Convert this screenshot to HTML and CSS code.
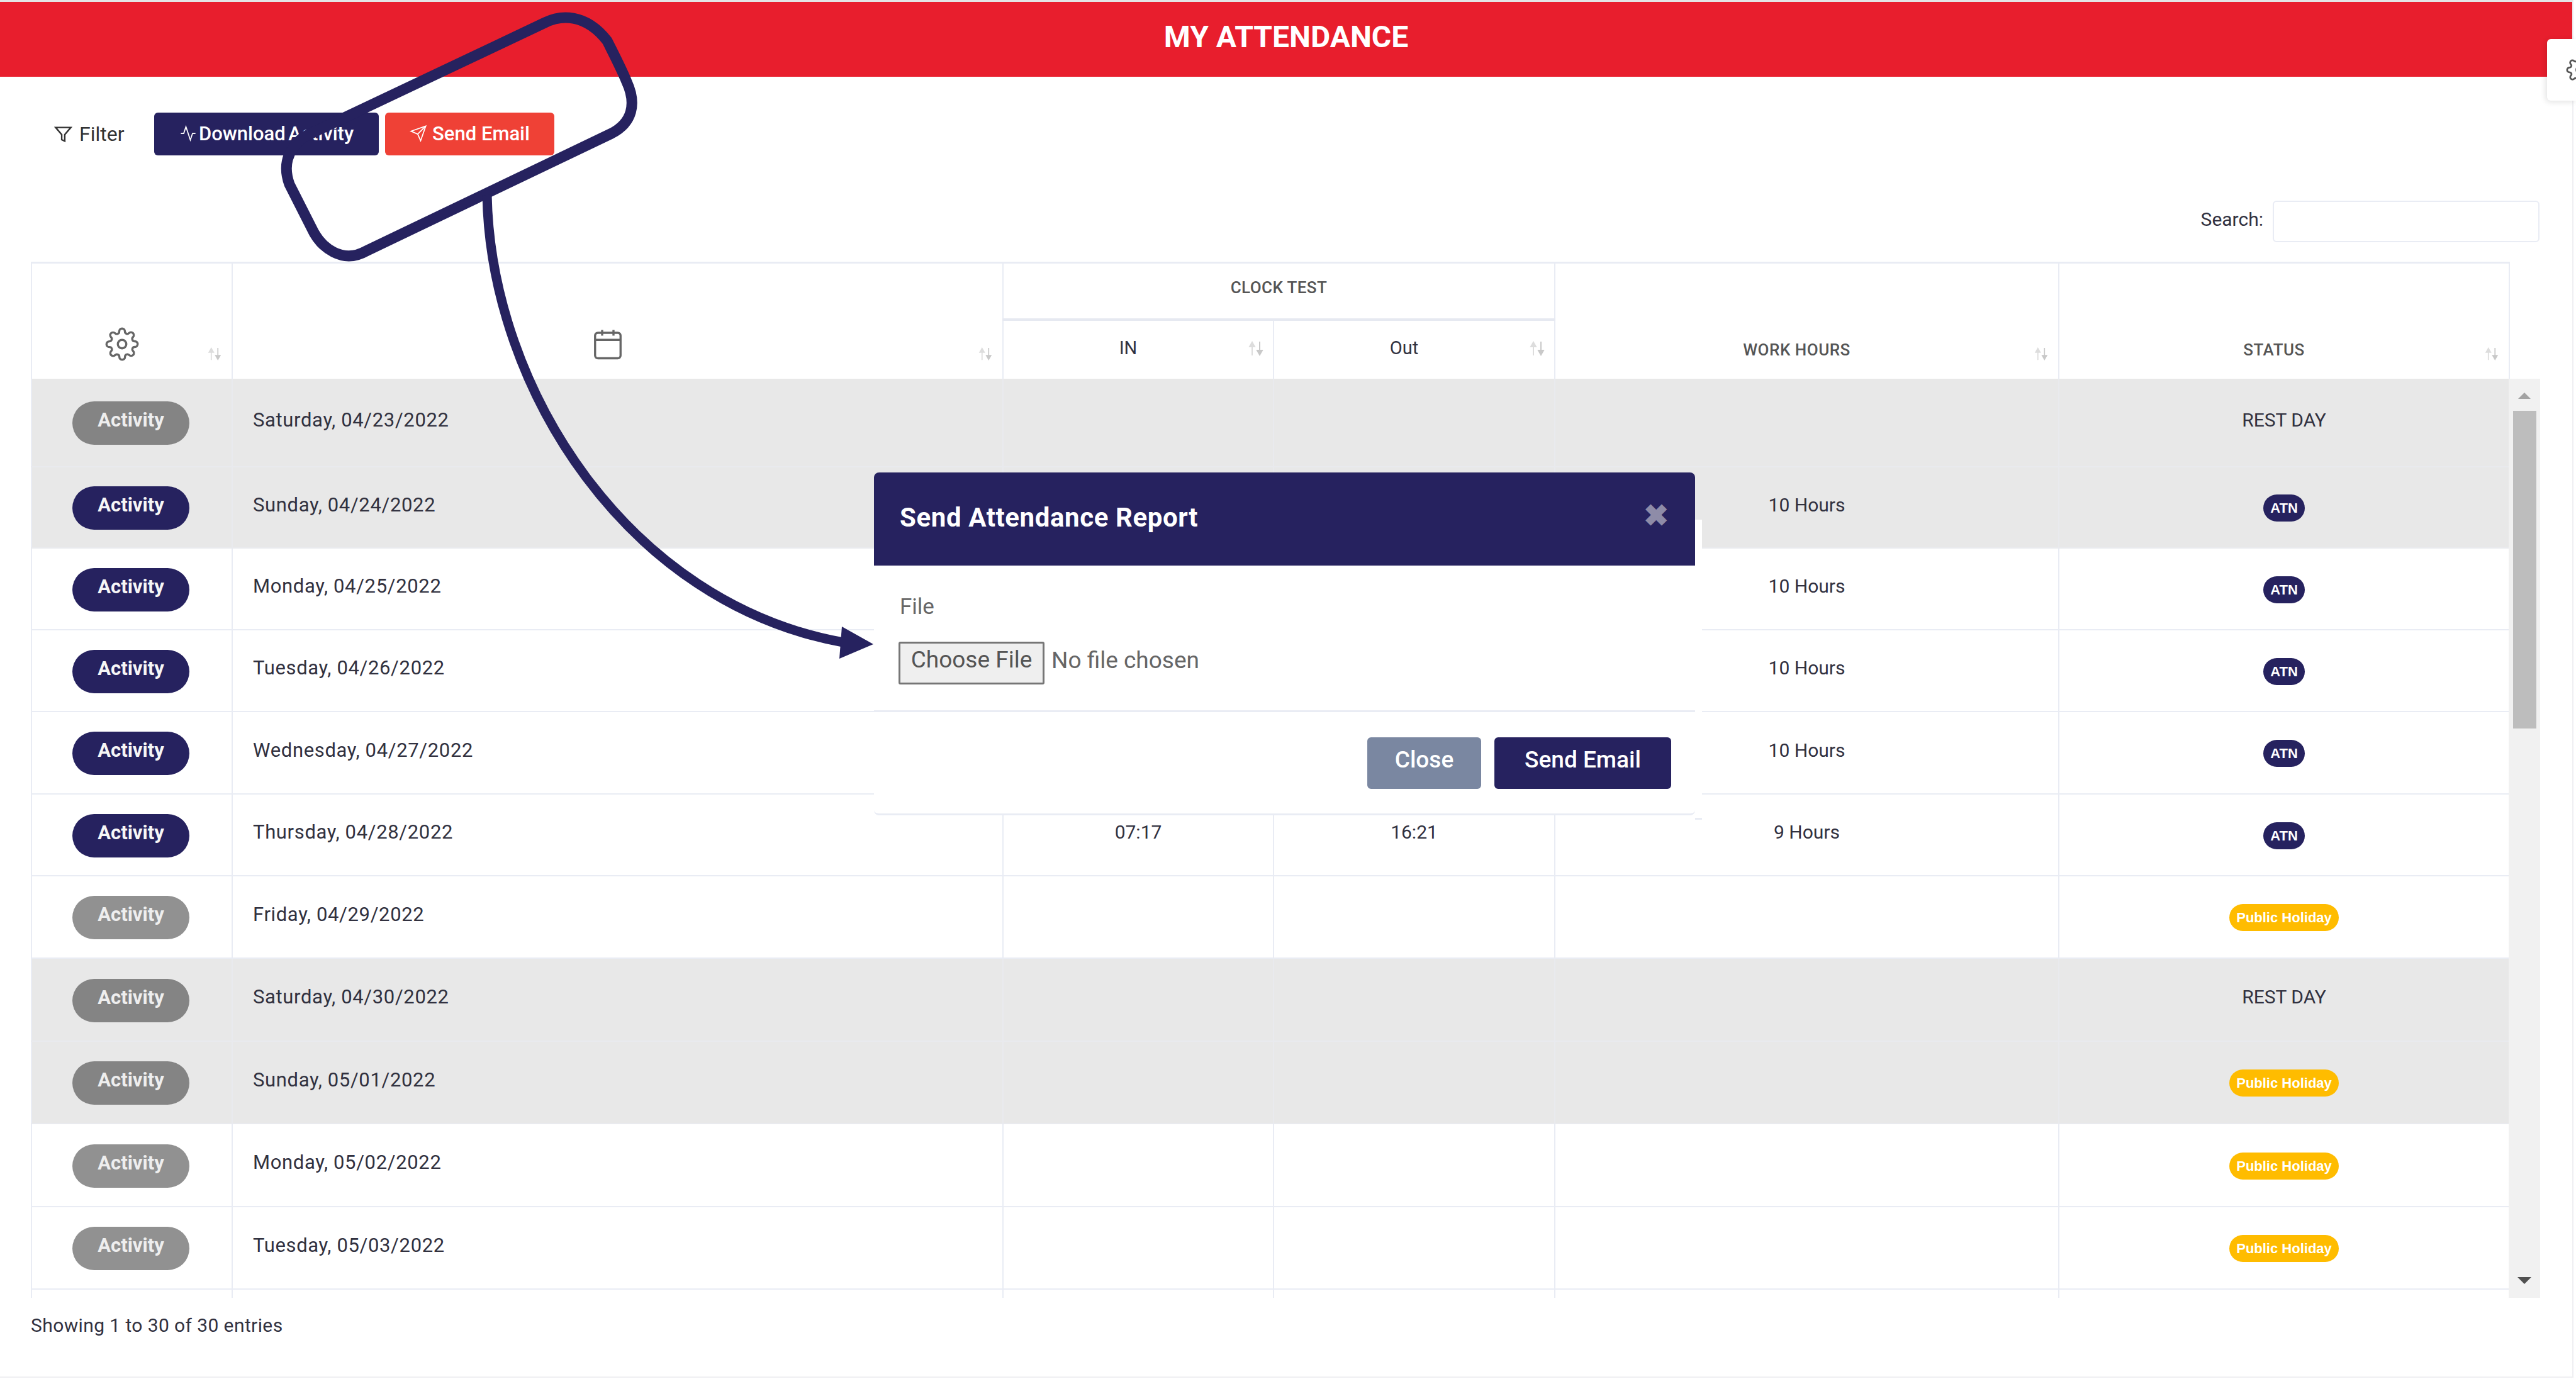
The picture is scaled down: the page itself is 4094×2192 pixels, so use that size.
FILE: index.html
```html
<!DOCTYPE html>
<html lang="en">
<head>
    <meta charset="UTF-8">
    <title>My Attendance</title>
    <link rel="stylesheet" href="styles.css">
</head>
<body>

<svg class="defs" width="0" height="0">
    <symbol id="sort" viewBox="0 0 26 24">
        <path class="sort-up" d="M7 23V6M3 9l4-7 4 7z"/>
        <path class="sort-down" d="M19 1v17M15 15l4 7 4-7z"/>
    </symbol>
    <symbol id="gear" viewBox="0 0 24 24">
        <circle cx="12" cy="12" r="3"/>
        <path d="M19.4 15a1.65 1.65 0 0 0 .33 1.82l.06.06a2 2 0 0 1 0 2.83 2 2 0 0 1-2.83 0l-.06-.06a1.65 1.65 0 0 0-1.82-.33 1.65 1.65 0 0 0-1 1.51V21a2 2 0 0 1-2 2 2 2 0 0 1-2-2v-.09A1.65 1.65 0 0 0 9 19.4a1.65 1.65 0 0 0-1.82.33l-.06.06a2 2 0 0 1-2.83 0 2 2 0 0 1 0-2.83l.06-.06a1.65 1.65 0 0 0 .33-1.82 1.65 1.65 0 0 0-1.51-1H3a2 2 0 0 1-2-2 2 2 0 0 1 2-2h.09A1.65 1.65 0 0 0 4.6 9a1.65 1.65 0 0 0-.33-1.82l-.06-.06a2 2 0 0 1 0-2.83 2 2 0 0 1 2.83 0l.06.06a1.65 1.65 0 0 0 1.82.33H9a1.65 1.65 0 0 0 1-1.51V3a2 2 0 0 1 2-2 2 2 0 0 1 2 2v.09a1.65 1.65 0 0 0 1 1.51 1.65 1.65 0 0 0 1.82-.33l.06-.06a2 2 0 0 1 2.83 0 2 2 0 0 1 0 2.83l-.06.06a1.65 1.65 0 0 0-.33 1.82V9a1.65 1.65 0 0 0 1.51 1H21a2 2 0 0 1 2 2 2 2 0 0 1-2 2h-.09a1.65 1.65 0 0 0-1.51 1z"/>
    </symbol>
</svg>

<div class="page">
    <header class="title-bar">MY ATTENDANCE</header>

    <div class="toolbar">
        <span class="filter">
            <svg class="icon-filter" viewBox="0 0 24 24"><polygon points="22 3 2 3 10 12.46 10 19 14 21 14 12.46 22 3"/></svg>
            Filter
        </span>
        <button class="btn btn-download">
            <svg class="btn-icon" viewBox="0 0 24 24"><polyline points="22 12 18 12 15 21 9 3 6 12 2 12"/></svg>
            Download Activity
        </button>
        <button class="btn btn-send">
            <svg class="btn-icon" viewBox="0 0 24 24"><line x1="22" y1="2" x2="11" y2="13"/><polygon points="22 2 15 22 11 13 2 9 22 2"/></svg>
            Send Email
        </button>
    </div>

    <div class="search-row">
        <label for="search">Search:</label>
        <input id="search" class="search-input" type="text">
    </div>

    <div class="table-area">
        <table class="grid grid-head">
            <colgroup>
                <col class="c1"><col class="c2"><col class="c3"><col class="c4"><col class="c5"><col class="c6">
            </colgroup>
            <thead>
                <tr class="head-top">
                    <th rowspan="2" class="th-low">
                        <svg class="head-icon"><use href="#gear"/></svg>
                        <svg class="sort"><use href="#sort"/></svg>
                    </th>
                    <th rowspan="2" class="th-low">
                        <svg class="head-icon" viewBox="0 0 24 24"><rect x="3" y="4" width="18" height="18" rx="2"/><line x1="16" y1="2" x2="16" y2="6"/><line x1="8" y1="2" x2="8" y2="6"/><line x1="3" y1="9" x2="21" y2="9"/></svg>
                        <svg class="sort"><use href="#sort"/></svg>
                    </th>
                    <th colspan="2" class="th-group">CLOCK TEST</th>
                    <th rowspan="2" class="th-low th-label">WORK HOURS<svg class="sort"><use href="#sort"/></svg></th>
                    <th rowspan="2" class="th-low th-label">STATUS<svg class="sort"><use href="#sort"/></svg></th>
                </tr>
                <tr class="head-sub">
                    <th class="th-sub">IN<svg class="sort sort-dark"><use href="#sort"/></svg></th>
                    <th class="th-sub">Out<svg class="sort sort-dark"><use href="#sort"/></svg></th>
                </tr>
            </thead>
        </table>

        <div class="scroll-wrap">
            <div class="scroll-body">
                <table class="grid">
                    <colgroup>
                        <col class="c1"><col class="c2"><col class="c3"><col class="c4"><col class="c5"><col class="c6">
                    </colgroup>
                    <tbody>
                        <tr class="off row-first"><td class="action"><span class="pill pill-muted">Activity</span></td><td class="date">Saturday, 04/23/2022</td><td></td><td></td><td></td><td class="status">REST DAY</td></tr>
                        <tr class="off row-second"><td class="action"><span class="pill">Activity</span></td><td class="date">Sunday, 04/24/2022</td><td></td><td></td><td class="mid">10 Hours</td><td class="action"><span class="tag">ATN</span></td></tr>
                        <tr class="row-short"><td class="action"><span class="pill">Activity</span></td><td class="date">Monday, 04/25/2022</td><td></td><td></td><td class="mid">10 Hours</td><td class="action"><span class="tag">ATN</span></td></tr>
                        <tr class="row-short"><td class="action"><span class="pill">Activity</span></td><td class="date">Tuesday, 04/26/2022</td><td></td><td></td><td class="mid">10 Hours</td><td class="action"><span class="tag">ATN</span></td></tr>
                        <tr><td class="action"><span class="pill">Activity</span></td><td class="date">Wednesday, 04/27/2022</td><td></td><td></td><td class="mid">10 Hours</td><td class="action"><span class="tag">ATN</span></td></tr>
                        <tr class="row-short"><td class="action"><span class="pill">Activity</span></td><td class="date">Thursday, 04/28/2022</td><td class="mid">07:17</td><td class="mid">16:21</td><td class="mid">9 Hours</td><td class="action"><span class="tag">ATN</span></td></tr>
                        <tr><td class="action"><span class="pill pill-muted">Activity</span></td><td class="date">Friday, 04/29/2022</td><td></td><td></td><td></td><td class="action"><span class="tag tag-holiday">Public Holiday</span></td></tr>
                        <tr class="off row-tall"><td class="action"><span class="pill pill-muted">Activity</span></td><td class="date">Saturday, 04/30/2022</td><td></td><td></td><td></td><td class="status">REST DAY</td></tr>
                        <tr class="off"><td class="action"><span class="pill pill-muted">Activity</span></td><td class="date">Sunday, 05/01/2022</td><td></td><td></td><td></td><td class="action"><span class="tag tag-holiday">Public Holiday</span></td></tr>
                        <tr class="row-tall"><td class="action"><span class="pill pill-muted">Activity</span></td><td class="date">Monday, 05/02/2022</td><td></td><td></td><td></td><td class="action"><span class="tag tag-holiday">Public Holiday</span></td></tr>
                        <tr><td class="action"><span class="pill pill-muted">Activity</span></td><td class="date">Tuesday, 05/03/2022</td><td></td><td></td><td></td><td class="action"><span class="tag tag-holiday">Public Holiday</span></td></tr>
                        <tr><td></td><td></td><td></td><td></td><td></td><td></td></tr>
                    </tbody>
                </table>
            </div>
            <div class="scrollbar">
                <span class="arrow-up"></span>
                <span class="thumb"></span>
                <span class="arrow-down"></span>
            </div>
        </div>
    </div>

    <div class="info">Showing 1 to 30 of 30 entries</div>
</div>

<div class="side-tab">
    <svg class="side-gear"><use href="#gear"/></svg>
</div>

<div class="modal">
    <div class="modal-head">
        <h2>Send Attendance Report</h2>
        <span class="modal-x">&#10006;</span>
    </div>
    <div class="modal-body">
        <div class="field-label">File</div>
        <div class="file-row">
            <span class="file-btn">Choose File</span>
            <span class="file-name">No file chosen</span>
        </div>
    </div>
    <div class="modal-foot">
        <button class="btn-modal btn-close">Close</button>
        <button class="btn-modal btn-submit">Send Email</button>
    </div>
</div>

<svg class="callout" viewBox="0 0 4094 2192">
    <path class="callout-line" d="M482 218L866 36C890 24 930 20 965 65C975 85 988 110 996 130C1012 165 1005 195 972 212L582 399C545 420 510 395 495 362L460 293C450 265 455 240 482 218Z"/>
    <path class="callout-line callout-thin" d="M774 310C780 620 1000 960 1340 1021"/>
    <polygon class="callout-head" points="1338,996 1388,1024 1334,1047"/>
</svg>

</body>
</html>
```

FILE: styles.css
```css
* { box-sizing: border-box; }

body { margin: 0; width: 4094px; height: 2192px; overflow: hidden; background: #fff; font-family: Roboto, "Liberation Sans", sans-serif; color: #31313f; position: relative; }
button { font-family: inherit; border: none; }
.defs { position: absolute; }

.page { width: 4090px; height: 2190px; border-top: 3px solid #e4e4e4; border-right: 2px solid #efeff2; border-bottom: 2px solid #efeff2; }

.title-bar { height: 119px; padding-bottom: 8px; background: #e81e2d; color: #fff; font-size: 48px; font-weight: 700; display: flex; align-items: center; justify-content: center; }

.toolbar { display: flex; align-items: center; height: 68px; margin-top: 57px; padding-left: 86px; gap: 10px; }
.filter { display: flex; align-items: center; width: 149px; gap: 11px; font-size: 32px; color: #333; }
.icon-filter { width: 29px; height: 29px; fill: none; stroke: #333; stroke-width: 2; }
.btn { display: flex; align-items: center; justify-content: center; height: 68px; padding-bottom: 3px; border-radius: 6px; color: #fff; font-size: 31px; font-weight: 500; gap: 3px; }
.btn-icon { width: 28px; height: 28px; fill: none; stroke: #fff; stroke-width: 1.5; }
.btn-download { width: 357px; background: #26225f; word-spacing: -3px; }
.btn-send { width: 269px; background: #ef4136; gap: 8px; }

.search-row { display: flex; align-items: center; justify-content: flex-end; gap: 15px; height: 66px; margin-top: 72px; padding-right: 52px; font-size: 30px; color: #31313f; }
.search-row label { padding-bottom: 8px; }
.search-input { width: 424px; height: 66px; border: 2px solid #e9ecf4; border-radius: 6px; background: #fff; }

.table-area { margin: 31px 0 0 49px; }
.grid { width: 3938px; table-layout: fixed; border-collapse: collapse; }
.c1 { width: 319px; }
.c2 { width: 1225px; }
.c3 { width: 430px; }
.c4 { width: 447px; }
.c5 { width: 801px; }
.c6 { width: 716px; }

.grid-head { border-top: 3px solid #e9ecf4; border-left: 2px solid #e9ecf4; }
.grid-head th { position: relative; padding: 0; border-right: 2px solid #e9ecf4; font-weight: 500; color: #555; }
.head-top { height: 90px; }
.head-sub { height: 94px; }
.th-group { font-size: 26px; letter-spacing: .4px; border-bottom: 4px solid #e6e9f1; padding-bottom: 10px !important; }
.th-low { vertical-align: bottom; padding: 0 32px 28px 0 !important; }
.th-label { font-size: 26px; letter-spacing: .5px; padding-bottom: 31px !important; }
.th-sub { font-size: 29px; font-weight: 400 !important; padding: 0 32px 6px 0 !important; color: #31313f !important; }
.head-icon { display: block; margin: 0 auto; width: 54px; height: 54px; fill: none; stroke: #666; stroke-width: 1.5; }
.sort { position: absolute; right: 14px; bottom: 29px; width: 26px; height: 21px; }
.sort-dark { bottom: 36px; height: 24px; }
.sort-up { fill: #ddd; stroke: #ddd; stroke-width: 2; }
.sort-down { fill: #c9c9c9; stroke: #c9c9c9; stroke-width: 2; }

.scroll-wrap { display: flex; height: 1461px; }
.scroll-body { width: 3938px; height: 1461px; overflow: hidden; }
.scroll-body .grid { border-left: 2px solid #e9ecf4; }
.scroll-body tr { height: 131px; }
.scroll-body tr.row-first { height: 140px; }
.scroll-body tr.row-second { height: 129px; }
.scroll-body tr.row-short { height: 130px; }
.scroll-body tr.row-tall { height: 132px; }
.scroll-body td { padding: 0 0 8px; border-right: 2px solid #e9ecf4; border-bottom: 2px solid #e9ecf4; font-size: 30px; vertical-align: middle; }
.scroll-body tr.off td { background: #e8e8e8; border-color: #e9eaee; }
.scroll-body td.date { padding-left: 32px; font-size: 31px; letter-spacing: .65px; }
.scroll-body td.mid, .scroll-body td.status { text-align: center; }
.scroll-body td.action { text-align: center; padding: 3px 0 0; }

.pill { display: inline-block; width: 186px; height: 69px; margin-left: -3px; line-height: 60px; border-radius: 35px; background: #26225f; color: #f6f6f6; font-size: 31px; font-weight: 700; text-align: center; vertical-align: middle; }
.pill-muted { background: rgba(0, 0, 0, .43); color: #eee; }
.tag { display: inline-block; min-width: 66px; height: 43px; line-height: 43px; padding: 0 10px; border-radius: 22px; background: #26225f; color: #fff; font-size: 22px; font-weight: 700; text-align: center; vertical-align: middle; font-family: "Liberation Sans", sans-serif; }
.tag-holiday { width: 174px; background: #ffbc00; padding: 0; }

.scrollbar { display: flex; flex-direction: column; align-items: center; width: 50px; background: #f1f1f1; }
.arrow-up { margin-top: 22px; border-left: 10px solid transparent; border-right: 10px solid transparent; border-bottom: 10px solid #a3a3a3; }
.thumb { width: 37px; height: 505px; margin-top: 19px; background: #bdbdbd; }
.arrow-down { margin-top: auto; margin-bottom: 22px; border-left: 11px solid transparent; border-right: 11px solid transparent; border-top: 11px solid #505050; }

.info { margin: 29px 0 0 49px; font-size: 30px; letter-spacing: .4px; line-height: 30px; color: #31313f; }

.side-tab { position: absolute; right: 0; top: 62px; width: 46px; height: 98px; overflow: hidden; background: #fff; border-radius: 6px 0 0 6px; box-shadow: -2px 2px 10px rgba(0, 0, 0, .12); }
.side-gear { display: block; width: 44px; height: 44px; margin: 27px 0 0 30px; fill: none; stroke: #555; stroke-width: 1.5; }

.modal { position: absolute; left: 1389px; top: 751px; width: 1305px; height: 545px; display: flex; flex-direction: column; background: #fff; border-radius: 8px; border-bottom: 3px solid #e9ecf4; }
.modal::after { content: ""; position: absolute; left: 100%; top: 75px; width: 11px; height: 474px; background: #fff; border-bottom: 3px solid #e9ecf4; }
.modal-head { display: flex; align-items: flex-start; justify-content: space-between; height: 148px; padding: 47px 42px 0 41px; background: #26225f; border-radius: 8px 8px 0 0; color: #fff; }
.modal-head h2 { margin: 0; font-size: 42px; letter-spacing: .6px; line-height: 50px; font-weight: 700; }
.modal-x { color: #8e8ca8; font-size: 48px; line-height: 44px; font-weight: 700; }
.modal-body { height: 233px; padding: 45px 0 0 39px; border-bottom: 3px solid #e9ecf4; color: #666; font-size: 35px; }
.field-label { line-height: 42px; margin-left: 2px; }
.file-row { display: flex; align-items: center; gap: 11px; margin-top: 34px; font-size: 37px; }
.file-btn { display: flex; align-items: center; justify-content: center; width: 232px; height: 68px; padding-bottom: 11px; background: #efefef; border: 3px solid #767676; border-radius: 3px; color: #555; }
.file-name { padding-bottom: 9px; }
.modal-foot { display: flex; justify-content: flex-end; gap: 21px; padding: 40px 38px 0 0; }
.btn-modal { height: 82px; border-radius: 6px; color: #fff; font-size: 37px; font-weight: 500; padding-bottom: 13px; }
.btn-close { width: 181px; background: #7a87a1; }
.btn-submit { width: 281px; background: #26225f; }

.callout { position: absolute; left: 0; top: 0; width: 4094px; height: 2192px; pointer-events: none; }
.callout-line { fill: none; stroke: #26225f; stroke-width: 17; stroke-linejoin: round; }
.callout-thin { stroke-width: 15; }
.callout-head { fill: #26225f; }
```
